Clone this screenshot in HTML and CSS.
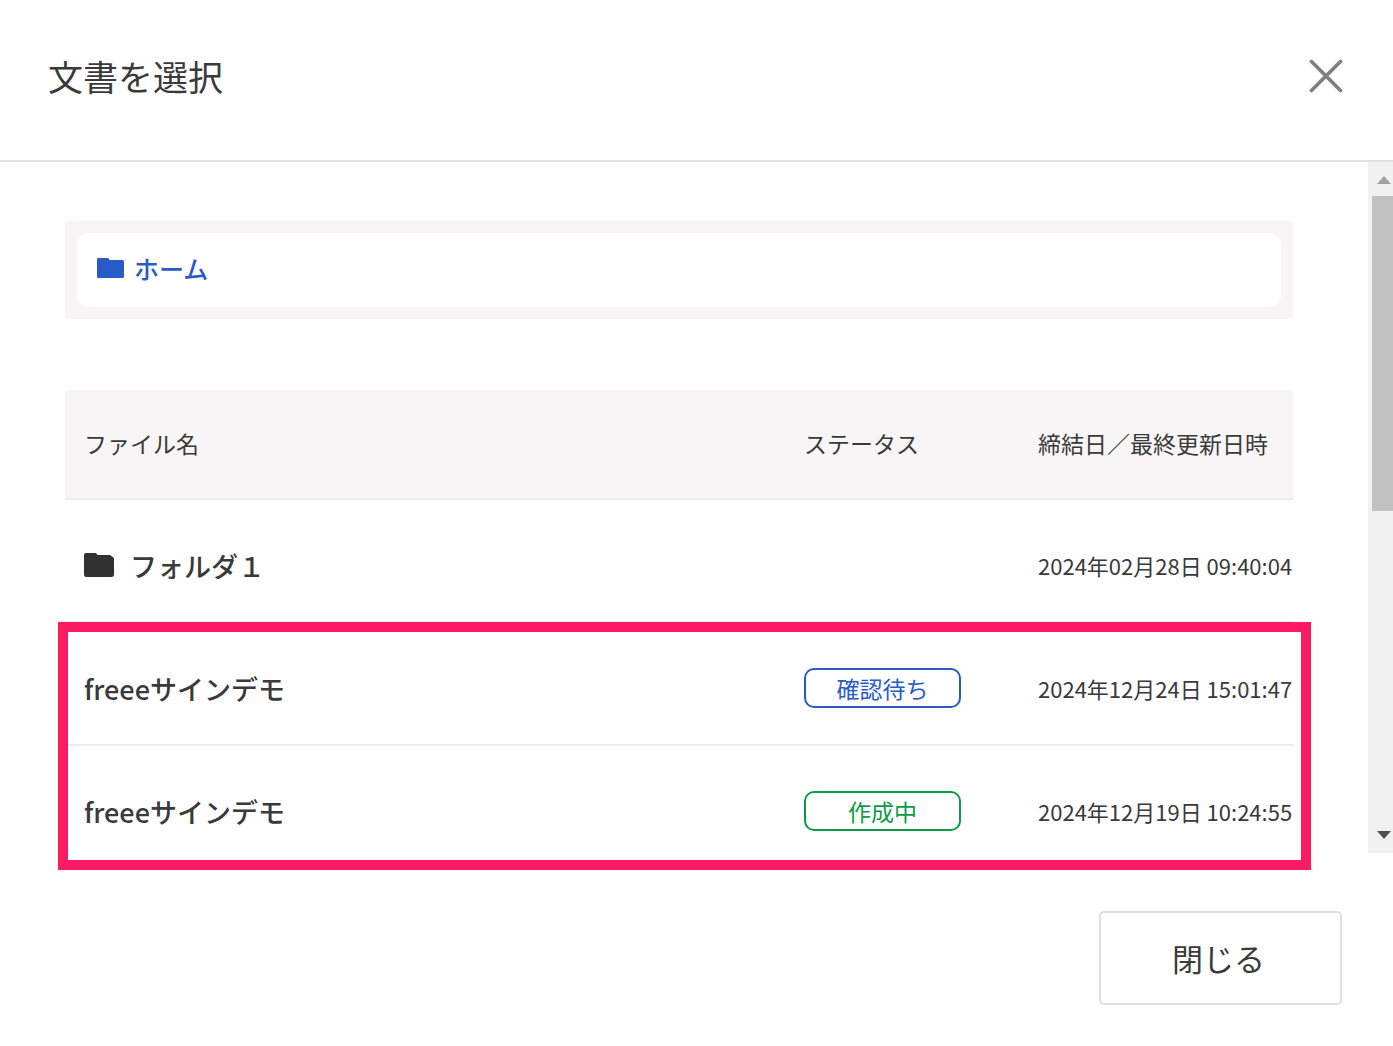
FILE: index.html
```html
<!DOCTYPE html>
<html lang="ja">
<head>
    <meta charset="UTF-8">
    <meta name="viewport" content="width=device-width, initial-scale=1.0">
    <title>文書を選択</title>
    <link rel="stylesheet" href="styles.css">
</head>
<body>
    <div class="modal">
        <header class="modal-header">
            <h1>文書を選択</h1>
            <button type="button" class="icon-close" aria-label="閉じる">
                <svg width="34" height="34" viewBox="0 0 34 34">
                    <path d="M2.5 2.5L31.5 31.5M31.5 2.5L2.5 31.5" fill="none" stroke="#808080" stroke-width="3.8" stroke-linecap="round"/>
                </svg>
            </button>
        </header>
        <main class="modal-body">
            <div class="content">
                <nav class="breadcrumb">
                    <div class="breadcrumb-inner">
                        <a href="#">
                            <svg width="27" height="20" viewBox="0 0 27 20">
                                <path d="M1 0H11.500L12.500 2H25.500Q27 2 27 3.500V18.500Q27 20 25.500 20H1Q0 20 0 19V1Q0 0 1 0Z" fill="#285ac8"/>
                            </svg>
                            <span>ホーム</span>
                        </a>
                    </div>
                </nav>
                <table class="file-table">
                    <thead>
                        <tr>
                            <th class="col-name">ファイル名</th>
                            <th class="col-status">ステータス</th>
                            <th class="col-date">締結日／最終更新日時</th>
                        </tr>
                    </thead>
                    <tbody>
                        <tr>
                            <td class="name">
                                <span class="folder">
                                    <svg width="30" height="24" viewBox="0 0 30 24">
                                        <path d="M2 0H12L13.500 2H26L28 3.500Q30 4 30 6V21.500Q30 24 27.500 24H2.500Q0 24 0 21.500V2Q0 0 2 0Z" fill="#323232"/>
                                    </svg>
                                    <span>フォルダ１</span>
                                </span>
                            </td>
                            <td></td>
                            <td class="date">2024年02月28日 09:40:04</td>
                        </tr>
                        <tr>
                            <td class="name">freeeサインデモ</td>
                            <td><span class="status waiting">確認待ち</span></td>
                            <td class="date">2024年12月24日 15:01:47</td>
                        </tr>
                        <tr>
                            <td class="name">freeeサインデモ</td>
                            <td><span class="status draft">作成中</span></td>
                            <td class="date">2024年12月19日 10:24:55</td>
                        </tr>
                    </tbody>
                </table>
            </div>
            <div class="scrollbar">
                <svg class="arrow" width="14" height="8" viewBox="0 0 14 8"><path d="M7 0L14 8H0Z" fill="#a3a3a3"/></svg>
                <div class="track"><div class="thumb"></div></div>
                <svg class="arrow" width="14" height="8" viewBox="0 0 14 8"><path d="M0 0H14L7 8Z" fill="#505050"/></svg>
            </div>
            <div class="highlight"></div>
        </main>
        <footer class="modal-footer">
            <button type="button" class="btn">閉じる</button>
        </footer>
    </div>
</body>
</html>
```
FILE: styles.css
```css
* {
    box-sizing: border-box;
}
body {
    margin: 0;
    font-family: "Noto Sans CJK JP", sans-serif;
    color: #3a3a3a;
    background-color: #fefefe;
}
.modal {
    display: flex;
    flex-direction: column;
    height: 100vh;
}
.modal-header {
    display: flex;
    justify-content: space-between;
    align-items: center;
    padding: 50px 50px 58px 48px;
    border-bottom: 2px solid #dfe1e5;
}
.modal-header h1 {
    margin: 0;
    font-size: 35px;
    font-weight: 400;
    line-height: 52px;
}
.icon-close {
    padding: 0;
    border: none;
    background: none;
    cursor: pointer;
}
.icon-close svg {
    display: block;
}
.modal-body {
    position: relative;
    display: flex;
    flex: 1;
    min-height: 0;
}
.content {
    flex: 1;
    padding: 59px 75px 0 65px;
    overflow: hidden;
}
.breadcrumb {
    padding: 12px;
    margin-bottom: 71px;
    background-color: #f7f5f6;
}
.breadcrumb-inner {
    padding: 17px 20px 21px;
    border-radius: 12px;
    background-color: #fff;
}
.breadcrumb a {
    display: flex;
    align-items: center;
    gap: 10px;
    color: #285ac8;
    font-size: 25px;
    font-weight: 500;
    line-height: 36px;
    text-decoration: none;
}
.file-table {
    width: 100%;
    table-layout: fixed;
    border-collapse: separate;
    border-spacing: 0;
}
.file-table th,
.file-table td {
    border-bottom: 2px solid #e9edf0;
    text-align: left;
    white-space: nowrap;
}
.file-table th {
    height: 110px;
    padding: 0 0 2px 19px;
    background-color: #f7f5f6;
    font-size: 23px;
    font-weight: 400;
}
.file-table td {
    height: 123px;
    padding: 9px 0 0 19px;
}
.col-status {
    width: 234px;
}
.col-date {
    width: 274px;
}
.file-table .name {
    font-size: 27px;
    font-weight: 500;
}
.file-table .date {
    font-size: 22px;
}
.folder {
    display: flex;
    align-items: center;
    gap: 16px;
}
.status {
    display: block;
    width: 157px;
    border: 2px solid;
    border-radius: 10px;
    font-size: 23px;
    line-height: 36px;
    text-align: center;
}
.waiting {
    color: #285ac8;
}
.draft {
    color: #0d9c45;
}
.scrollbar {
    display: flex;
    flex-direction: column;
    align-items: center;
    width: 25px;
    padding: 14px 0;
    background-color: #f1f1f1;
}
.arrow {
    margin-left: 7px;
}
.track {
    align-self: stretch;
    flex: 1;
    padding: 12px 0 12px 4px;
}
.thumb {
    height: 315px;
    background-color: #c1c1c1;
}
/* frame around the selectable documents */
.highlight {
    position: absolute;
    left: 58px;
    right: 82px;
    bottom: -17px;
    height: 248px;
    border: 10px solid #fa1b64;
    pointer-events: none;
}
.modal-footer {
    display: flex;
    justify-content: flex-end;
    padding: 58px 51px 41px;
}
.btn {
    width: 243px;
    height: 94px;
    padding: 0 6px 2px 2px;
    border: 2px solid #dfdfdf;
    border-radius: 5px;
    background-color: #fff;
    color: #3a3a3a;
    font-family: inherit;
    font-size: 31px;
    cursor: pointer;
}
```
